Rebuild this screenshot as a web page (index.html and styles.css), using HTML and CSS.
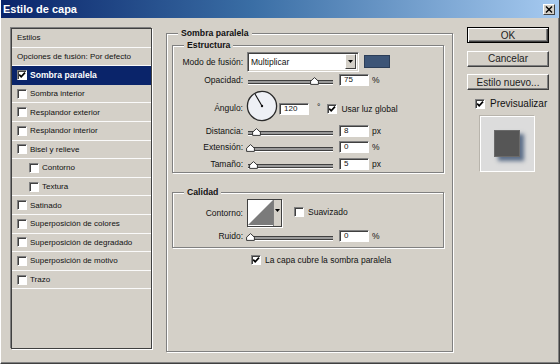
FILE: index.html
```html
<!DOCTYPE html>
<html lang="es">

<head>
    <meta charset="utf-8">
    <title>Estilo de capa</title>
    <link rel="stylesheet" href="styles.css">
</head>

<body>
    <div class="window">
        <div class="titlebar">
            <span class="title">Estilo de capa</span>
            <span class="close">
                <svg width="8" height="7" viewBox="0 0 8 7"><path d="M1 0.5 L7 6.5 M7 0.5 L1 6.5" stroke="#000" stroke-width="1.4"/></svg>
            </span>
        </div>

        <div class="content">
            <ul class="styles">
                <li class="head">Estilos</li>
                <li class="head">Opciones de fusión: Por defecto</li>
                <li class="selected"><span class="check on"></span>Sombra paralela</li>
                <li><span class="check"></span>Sombra interior</li>
                <li><span class="check"></span>Resplandor exterior</li>
                <li><span class="check"></span>Resplandor interior</li>
                <li><span class="check"></span>Bisel y relieve</li>
                <li class="sub"><span class="check"></span>Contorno</li>
                <li class="sub"><span class="check"></span>Textura</li>
                <li><span class="check"></span>Satinado</li>
                <li><span class="check"></span>Superposición de colores</li>
                <li><span class="check"></span>Superposición de degradado</li>
                <li><span class="check"></span>Superposición de motivo</li>
                <li><span class="check"></span>Trazo</li>
            </ul>

            <fieldset class="group">
                <legend>Sombra paralela</legend>

                <fieldset class="subgroup">
                    <legend>Estructura</legend>
                    <div class="form estructura">
                        <label>Modo de fusión:</label>
                        <div class="controls">
                            <div class="select">
                                <span>Multiplicar</span>
                                <span class="arrow"><svg width="5" height="3" viewBox="0 0 5 3"><path d="M0 0 H5 L2.5 3 Z" fill="#000"/></svg></span>
                            </div>
                            <span class="swatch"></span>
                        </div>

                        <label>Opacidad:</label>
                        <div class="controls">
                            <div class="slider"><span class="thumb" style="left: 75%"></span></div>
                            <span class="field">75</span>
                            <span class="unit">%</span>
                        </div>

                        <label class="angle-label">Ángulo:</label>
                        <div class="controls">
                            <svg class="dial" width="32" height="32" viewBox="0 0 32 32">
                                <circle cx="16" cy="16" r="14.6" fill="#eef0f5" stroke="#2a2a2a" stroke-width="1.3"/>
                                <path d="M16 16 L9 4" stroke="#111" stroke-width="1.1"/>
                                <circle cx="16" cy="16" r="1.2" fill="#111"/>
                            </svg>
                            <span class="field">120</span>
                            <span class="unit deg">°</span>
                            <span class="check on"></span>
                            <span class="check-label">Usar luz global</span>
                        </div>

                        <label>Distancia:</label>
                        <div class="controls">
                            <div class="slider"><span class="thumb" style="left: 7%"></span></div>
                            <span class="field">8</span>
                            <span class="unit">px</span>
                        </div>

                        <label>Extensión:</label>
                        <div class="controls">
                            <div class="slider"><span class="thumb" style="left: 0%"></span></div>
                            <span class="field">0</span>
                            <span class="unit">%</span>
                        </div>

                        <label>Tamaño:</label>
                        <div class="controls">
                            <div class="slider"><span class="thumb" style="left: 4%"></span></div>
                            <span class="field">5</span>
                            <span class="unit">px</span>
                        </div>
                    </div>
                </fieldset>

                <fieldset class="subgroup calidad">
                    <legend>Calidad</legend>
                    <div class="form calidad-form">
                        <label>Contorno:</label>
                        <div class="controls">
                            <div class="contour">
                                <svg width="25" height="25" viewBox="0 0 25 25"><rect width="25" height="25" fill="#fff"/><path d="M0 25 L25 0 V25 Z" fill="#7b7b7b"/></svg>
                                <span class="contour-arrow"><svg width="5" height="3" viewBox="0 0 5 3"><path d="M0 0 H5 L2.5 3 Z" fill="#000"/></svg></span>
                            </div>
                            <span class="check suave"></span>
                            <span class="check-label">Suavizado</span>
                        </div>

                        <label>Ruido:</label>
                        <div class="controls">
                            <div class="slider"><span class="thumb" style="left: 0%"></span></div>
                            <span class="field">0</span>
                            <span class="unit">%</span>
                        </div>
                    </div>
                </fieldset>

                <div class="knockout">
                    <span class="check on"></span>
                    <span class="check-label">La capa cubre la sombra paralela</span>
                </div>
            </fieldset>

            <div class="actions">
                <button class="btn default">OK</button>
                <button class="btn">Cancelar</button>
                <button class="btn">Estilo nuevo...</button>
                <div class="preview-toggle">
                    <span class="check on"></span>
                    <span class="check-label">Previsualizar</span>
                </div>
                <div class="preview">
                    <div class="preview-square"></div>
                </div>
            </div>
        </div>
    </div>
</body>

</html>
```

FILE: styles.css
```css
* {
    margin: 0;
    box-sizing: border-box;
}

body {
    background: #d4d0c8;
    font-family: "Liberation Sans", Arial, sans-serif;
    color: #111;
}

.window {
    width: 560px;
    height: 364px;
    background: #d4d0c8;
    border-left: 1px solid #fff;
    border-right: 1px solid #404040;
    border-bottom: 1px solid #404040;
    box-shadow: inset -1px -1px #808080;
}

.titlebar {
    height: 18px;
    background: linear-gradient(to right, #0a246a 0%, #3a6ea5 45%, #a6caf0 100%);
    display: flex;
    align-items: center;
    justify-content: space-between;
    padding: 0 4px 0 2px;
}

.title {
    color: #fff;
    font-weight: bold;
    font-size: 11px;
}

.close {
    width: 12px;
    height: 11px;
    background: #d4d0c8;
    border: 1px solid;
    border-color: #fff #404040 #404040 #fff;
    display: flex;
    align-items: center;
    justify-content: center;
}

.content {
    display: flex;
    align-items: flex-start;
    padding: 10px 0 0 10px;
}

/* lista de estilos */

.styles {
    list-style: none;
    padding: 0;
    width: 141px;
    height: 321px;
    border: 1px solid #404040;
    box-shadow: -1px -1px 0 #808080, 1px 1px 0 #fff;
    font-size: 8px;
}

.styles li {
    height: 18.6px;
    border-bottom: 1px solid #fafafa;
    display: flex;
    align-items: center;
    gap: 3px;
    padding-left: 5px;
}

.styles li.sub {
    padding-left: 17px;
}

.styles li.selected {
    background: #0a246a;
    color: #fff;
    font-weight: bold;
    font-size: 8.6px;
    border-bottom-color: #0a246a;
}

.check {
    display: inline-block;
    width: 10px;
    height: 10px;
    flex: none;
    background: #fff;
    border-top: 1px solid #808080;
    border-left: 1px solid #808080;
    border-right: 1px solid #fff;
    border-bottom: 1px solid #fff;
    box-shadow: inset 1px 1px #404040;
}

.check.on {
    background: #fff url("data:image/svg+xml,%3Csvg xmlns='http://www.w3.org/2000/svg' width='8' height='8' viewBox='0 0 8 8'%3E%3Cpath d='M1.2 3.6 L3.2 5.8 L7 1.6' fill='none' stroke='%23000' stroke-width='1.7'/%3E%3C/svg%3E") no-repeat 0 0;
}

/* grupo central */

.group {
    width: 287px;
    height: 324px;
    margin-left: 14px;
    padding: 0 0 0 5px;
    border: 1px solid #808080;
    box-shadow: inset 1px 1px #fff, 1px 1px #fff;
}

legend {
    font-size: 8.7px;
    font-weight: bold;
    padding: 0 3px;
    margin-left: 6px;
    line-height: 11px;
    background: #d4d0c8;
}

.subgroup {
    width: 272px;
    margin-top: 1px;
    padding: 0;
    border: 1px solid #808080;
    box-shadow: inset 1px 1px #fff, 1px 1px #fff;
}

.subgroup legend {
    margin-left: 11px;
}

.subgroup.calidad {
    margin-top: 14px;
    padding-bottom: 4px;
}

.form {
    display: grid;
    grid-template-columns: 70px auto;
    column-gap: 4px;
    align-items: center;
    font-size: 8.5px;
}

.estructura {
    grid-template-rows: 21px 15px 36px 16px 16px 17px;
}

.calidad-form {
    grid-template-rows: 30px 15px;
}

.form label {
    text-align: right;
}

.form .angle-label {
    padding-top: 6px;
}

.controls {
    display: flex;
    align-items: center;
}

.select {
    width: 112px;
    height: 20px;
    background: #fff;
    border-top: 1px solid #808080;
    border-left: 1px solid #808080;
    border-right: 1px solid #fff;
    border-bottom: 1px solid #fff;
    box-shadow: inset 1px 1px #404040, inset -1px -1px #d4d0c8;
    display: flex;
    align-items: center;
    justify-content: space-between;
    padding: 2px 2px 2px 3px;
}

.arrow {
    width: 11px;
    height: 15px;
    background: #d4d0c8;
    border: 1px solid;
    border-color: #fff #404040 #404040 #fff;
    display: flex;
    align-items: center;
    justify-content: center;
}

.swatch {
    width: 26px;
    height: 13px;
    margin-left: 5px;
    background: #3d5577;
    border: 1px solid #2c3e58;
}

.slider {
    position: relative;
    width: 85px;
    height: 4px;
    margin-left: 1px;
    margin-top: 4px;
    background: #9a9a9a;
    border-top: 1px solid #404040;
    border-bottom: 1px solid #404040;
    box-shadow: 0 1px #fff;
}

.thumb {
    position: absolute;
    bottom: -2px;
    width: 9px;
    height: 8px;
    margin-left: -2px;
    background: url("data:image/svg+xml,%3Csvg xmlns='http://www.w3.org/2000/svg' width='9' height='8' viewBox='0 0 9 8'%3E%3Cpath d='M4.5 0.6 L8.4 4.2 V7.4 H0.6 V4.2 Z' fill='%23fff' stroke='%23222' stroke-width='0.9'/%3E%3C/svg%3E") no-repeat;
}

.field {
    width: 30px;
    height: 12px;
    margin-left: 6px;
    padding-left: 4px;
    background: #fff;
    font-size: 8px;
    line-height: 10px;
    border-top: 1px solid #808080;
    border-left: 1px solid #808080;
    border-right: 1px solid #fff;
    border-bottom: 1px solid #fff;
    box-shadow: inset 1px 1px #404040;
}

.unit {
    margin-left: 3px;
}

.dial {
    margin-left: -1px;
    margin-top: 2px;
}

.dial + .field {
    margin-left: 1px;
    margin-top: 7px;
}

.deg {
    margin-left: 8px;
    margin-right: 7px;
    margin-top: 4px;
}

.dial ~ .check,
.dial ~ .check-label {
    margin-top: 7px;
}

.check-label {
    margin-left: 4px;
}

.contour {
    display: flex;
    height: 28px;
    border: 1px solid #404040;
    box-shadow: 1px 1px #fff;
    background: #fff;
}

.contour-arrow {
    width: 8px;
    background: #d4d0c8;
    border-left: 1px solid #808080;
    display: flex;
    justify-content: center;
    padding-top: 9px;
}

.suave {
    margin-left: 12px;
    margin-top: -3px;
}

.suave + .check-label {
    margin-top: -3px;
}

.knockout {
    display: flex;
    align-items: center;
    margin: 7px 0 0 79px;
    font-size: 8.5px;
}

/* botones */

.actions {
    width: 82px;
    margin-left: 14px;
    margin-top: -1px;
}

.btn {
    display: block;
    width: 82px;
    height: 16px;
    margin-bottom: 7.5px;
    background: #d4d0c8;
    font-family: "Liberation Sans", Arial, sans-serif;
    font-size: 10px;
    color: #222;
    padding: 0;
    border: 1px solid;
    border-color: #fff #404040 #404040 #fff;
    box-shadow: inset -1px -1px #808080;
}

.btn.default {
    border-color: #000;
    box-shadow: inset 1px 1px #fff, inset -1px -1px #404040, inset -2px -2px #808080;
}

.preview-toggle {
    display: flex;
    align-items: center;
    margin: 8px 0 0 8px;
    font-size: 10px;
}

.preview-toggle .check-label {
    margin-left: 5px;
}

.preview {
    width: 55px;
    height: 56px;
    margin: 7px 0 0 13px;
    background: #dcdcdc;
    border: 1px solid #fff;
    box-shadow: -1px -1px 0 #b8b4ac;
    display: flex;
    align-items: center;
    justify-content: center;
}

.preview-square {
    width: 26px;
    height: 27px;
    margin: 0 2px 2px 0;
    background: #565656;
    border: 1px solid #6a6a6a;
    box-shadow: 4px 4px 4px rgba(60, 82, 115, 0.8);
}
```
